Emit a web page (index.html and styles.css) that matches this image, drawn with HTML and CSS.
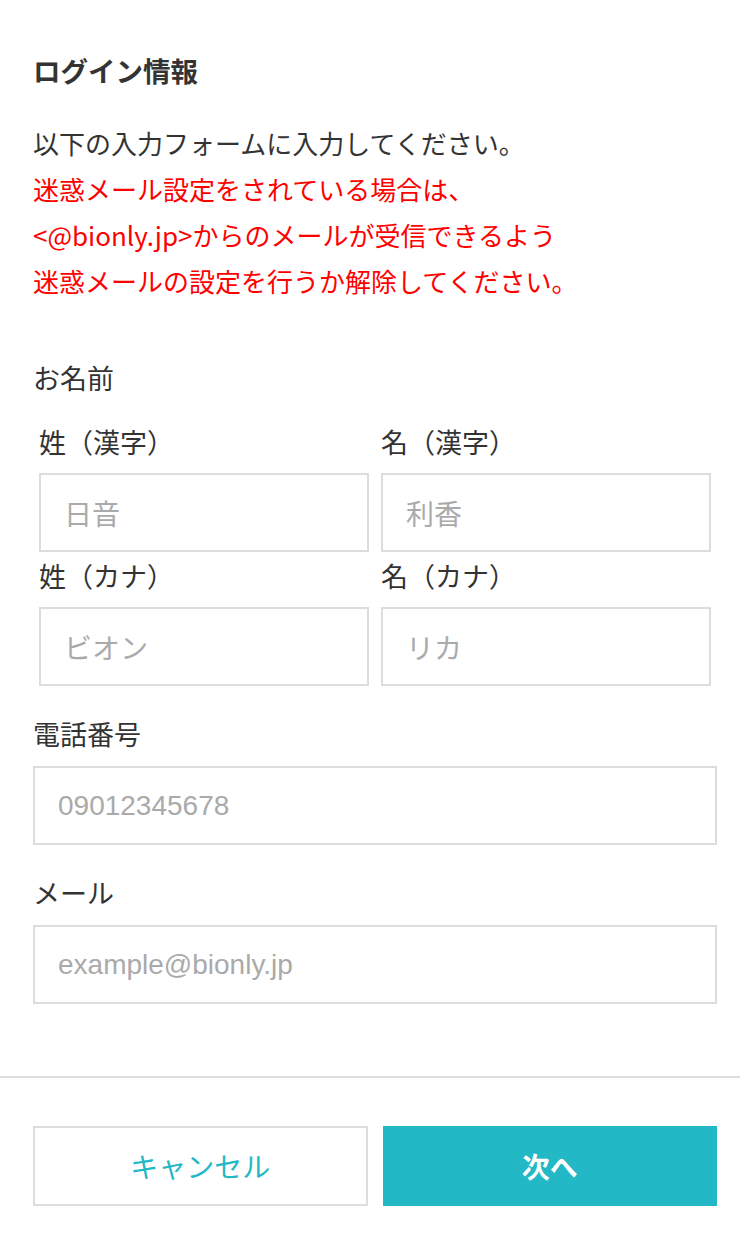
FILE: index.html
```html
<!DOCTYPE html>
<html lang="ja">
<head>
  <meta charset="UTF-8" />
  <title>ログイン情報</title>
  <link rel="stylesheet" href="styles.css">
</head>
<body>
  <main class="content">
    <h1 class="title">ログイン情報</h1>
    <p class="lead">
      以下の入力フォームに入力してください。<br>
      <span class="warn">迷惑メール設定をされている場合は、<br>
      &lt;@bionly.jp&gt;からのメールが受信できるよう<br>
      迷惑メールの設定を行うか解除してください。</span>
    </p>

    <section class="field field-name">
      <div class="label">お名前</div>
      <div class="name-grid">
        <label class="sub">
          <span class="sub-label">姓（漢字）</span>
          <input type="text" placeholder="日音" />
        </label>
        <label class="sub">
          <span class="sub-label">名（漢字）</span>
          <input type="text" placeholder="利香" />
        </label>
        <label class="sub">
          <span class="sub-label">姓（カナ）</span>
          <input type="text" placeholder="ビオン" />
        </label>
        <label class="sub">
          <span class="sub-label">名（カナ）</span>
          <input type="text" placeholder="リカ" />
        </label>
      </div>
    </section>

    <label class="field">
      <span class="label">電話番号</span>
      <input type="tel" class="latin" placeholder="09012345678" />
    </label>

    <label class="field">
      <span class="label">メール</span>
      <input type="email" class="latin" placeholder="example@bionly.jp" />
    </label>
  </main>

  <footer class="actions">
    <button class="btn btn-cancel">キャンセル</button>
    <button class="btn btn-next">次へ</button>
  </footer>
</body>
</html>
```

FILE: styles.css
```css
body {
  margin: 0;
  font-family: "Noto Sans CJK JP", "Noto Sans", sans-serif;
  color: #333;
  background: #fff;
}
.content {
  padding: 52px 23px 0 33px;
}
.title {
  margin: 0;
  font-size: 27.5px;
  line-height: 36px;
  font-weight: bold;
}
.lead {
  margin: 32px 0 0;
  font-size: 26px;
  line-height: 46px;
}
.warn {
  color: #ff0000;
}
.field {
  display: block;
  margin-top: 30px;
}
.field-name {
  margin-top: 56px;
}
.label {
  display: block;
  font-size: 27px;
  line-height: 36px;
  margin-bottom: 14px;
}
.field-name .label {
  margin-bottom: 28px;
}
.name-grid {
  display: grid;
  grid-template-columns: 1fr 1fr;
  column-gap: 12px;
  row-gap: 6px;
  padding: 0 6px;
}
.sub {
  display: block;
}
.sub-label {
  display: block;
  font-size: 27px;
  line-height: 36px;
  margin-bottom: 13px;
}
input {
  display: block;
  box-sizing: border-box;
  width: 100%;
  height: 79px;
  margin: 0;
  border: 2px solid #dddddd;
  border-radius: 0;
  padding: 0 0 0 23px;
  font-family: "Noto Sans CJK JP", sans-serif;
  font-size: 28px;
  color: #333;
  background: #fff;
  outline: none;
}
input::placeholder {
  color: #aaa;
}
input.latin {
  font-family: "Liberation Sans", Arial, sans-serif;
  font-size: 28px;
}
.actions {
  margin-top: 72px;
  border-top: 2px solid #dddddd;
  padding: 48px 23px 0 33px;
  display: grid;
  grid-template-columns: 1fr 1fr;
  column-gap: 15px;
}
.btn {
  height: 80px;
  font-family: "Noto Sans CJK JP", sans-serif;
  font-size: 28px;
  border-radius: 0;
  cursor: pointer;
}
.btn-cancel {
  background: #fff;
  color: #22b8c6;
  border: 2px solid #dddddd;
}
.btn-next {
  background: #22b8c6;
  color: #fff;
  border: none;
  font-weight: bold;
}
```
